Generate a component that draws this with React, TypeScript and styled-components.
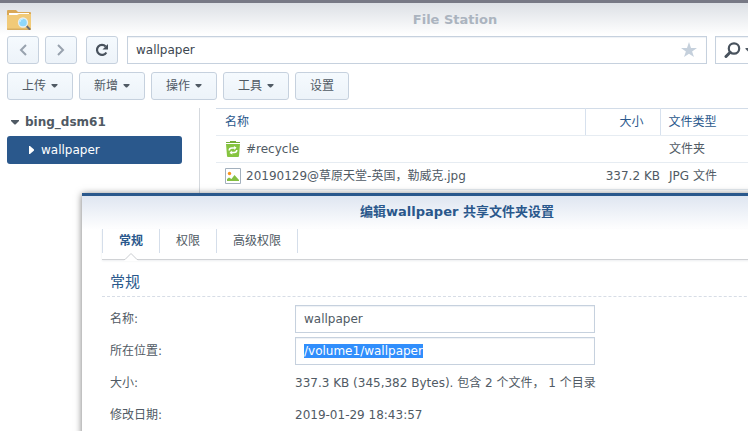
import React, { useEffect, useRef } from "react";
import styled, { createGlobalStyle, css } from "styled-components";

const ink = "#505a64";
const blue = "#2a588c";
const line = "#c6d1de";

const GlobalStyle = createGlobalStyle`
  * { box-sizing: border-box; }
  body {
    margin: 0;
    overflow: hidden;
    background: #fff;
    color: ${ink};
    font: 12px/16px "DejaVu Sans", "Noto Sans CJK SC", sans-serif;
  }
  button, input { font: inherit; color: inherit; }
`;

const Screen = styled.main`
  height: 100vh;
  overflow: hidden;
`;

const Window = styled.section`
  position: relative;
  display: flex;
  flex-direction: column;
  width: calc(100% + 162px);
  min-height: 100vh;
  border-top: 3px solid #777985;
  background: linear-gradient(#dce0e5, #fff 32px);
`;

const TitleBar = styled.header`
  display: grid;
  grid-template-columns: 24px 1fr 24px;
  align-items: center;
  height: 33px;
  padding: 0 7px;
`;

const Title = styled.h1`
  margin: 0;
  color: #abb4bf;
  font-size: 13px;
  line-height: 18px;
  font-weight: bold;
  text-align: center;
`;

const NavBar = styled.nav`
  display: flex;
  gap: 8px;
  padding: 0 7px;
`;

const NavGroup = styled.div`
  display: flex;
  gap: 6px;
  padding-right: 1px;
`;

const face = css`
  display: flex;
  align-items: center;
  justify-content: center;
  height: 28px;
  border: 1px solid ${line};
  border-radius: 3px;
  background: linear-gradient(#f5fafe, #edf3f9);
`;

const NavButton = styled.button`
  ${face}
  width: 32px;
  padding: 0;
`;

const field = css`
  height: 28px;
  border: 1px solid ${line};
  background: #fff;
  box-shadow: inset 0 1px 1px #eef1f5;
`;

const AddressBox = styled.div`
  ${field}
  display: flex;
  flex: 1;
  align-items: center;
  padding-right: 9px;
  margin-left: 1px;
`;

const BareInput = styled.input`
  flex: 1;
  min-width: 0;
  padding: 0 8px;
  border: 0;
  outline: 0;
  background: none;
`;

const AddressInput = styled(BareInput)`
  color: #3c4650;
`;

const IconButton = styled.button`
  display: flex;
  align-items: center;
  gap: 4px;
  padding: 0;
  border: 0;
  background: none;
`;

const SearchBox = styled.div`
  ${field}
  display: flex;
  flex: none;
  align-items: center;
  width: 188px;
  padding-left: 8px;
`;

const Toolbar = styled.div`
  display: flex;
  gap: 6px;
  padding: 8px 7px;
`;

const ToolButton = styled.button`
  ${face}
  gap: 5px;
  padding: 0 14px;
`;

const Body = styled.div`
  display: flex;
  flex: 1;
`;

const Sidebar = styled.aside`
  width: 200px;
  padding: 0 17px 0 7px;
  border-right: 1px solid #d5d9de;
`;

const TreeNode = styled.button<{ $child?: boolean }>`
  display: flex;
  align-items: center;
  gap: ${(p) => (p.$child ? 7 : 6)}px;
  width: 100%;
  height: 28px;
  padding: 0 0 0 ${(p) => (p.$child ? 22 : 4)}px;
  border: 0;
  border-radius: 3px;
  background: ${(p) => (p.$child ? blue : "none")};
  color: ${(p) => (p.$child ? "#fff" : ink)};
  font-weight: ${(p) => (p.$child ? "normal" : "bold")};
`;

const FileTable = styled.table`
  flex: 1;
  align-self: flex-start;
  margin: 0 7px 0 16px;
  table-layout: fixed;
  border-collapse: collapse;
  border-top: 1px solid #d2dce8;
`;

const Column = styled.col<{ $width?: number }>`
  width: ${(p) => (p.$width ? `${p.$width}px` : "auto")};
`;

const HeadCell = styled.th<{ $right?: boolean }>`
  height: 27px;
  padding: 0 ${(p) => (p.$right ? 16 : 8)}px 0 8px;
  border-bottom: 1px solid #e6ecf2;
  color: ${blue};
  font-weight: normal;
  text-align: ${(p) => (p.$right ? "right" : "left")};
  & + & { border-left: 1px solid #d7e1ee; }
  &:first-child { padding-left: 9px; }
`;

const Cell = styled.td<{ $right?: boolean }>`
  height: 27px;
  padding: 0 0 0 ${(p) => (p.$right ? 0 : 9)}px;
  border-bottom: 1px solid #e6ecf2;
  text-align: ${(p) => (p.$right ? "right" : "left")};
`;

const FileName = styled.span`
  display: flex;
  align-items: center;
  gap: 5px;
`;

const Dialog = styled.section`
  position: absolute;
  top: 190px;
  right: 78px;
  left: 82px;
  min-height: 420px;
  border-top: 3px solid ${blue};
  background: linear-gradient(#dfe6f1, #fff 34px);
  box-shadow: 0 1px 7px rgba(0, 0, 0, 0.55);
`;

const DialogTitle = styled.h2`
  margin: 0;
  padding: 7px 0 8px;
  color: ${blue};
  font-size: 13px;
  line-height: 18px;
  text-align: center;
`;

const Tabs = styled.div`
  display: flex;
  margin: 0 20px;
  padding-bottom: 6px;
  border-bottom: 1px solid #d0d2d5;
  box-shadow: 0 1px 2px #eceef0;
`;

const Tab = styled.button<{ $active?: boolean }>`
  position: relative;
  height: 24px;
  padding: 0 16px;
  border: solid #d5deea;
  border-width: 0 1px 0 0;
  background: none;
  color: ${(p) => (p.$active ? blue : ink)};
  font-weight: ${(p) => (p.$active ? "bold" : "normal")};
  &:first-child { border-left-width: 1px; }
`;

const Pointer = styled.svg`
  position: absolute;
  top: 24px;
  left: calc(50% - 7px);
`;

const Section = styled.h3`
  margin: 11px 20px 8px;
  padding: 0 8px 3px;
  border-bottom: 1px dashed #d7dde6;
  color: ${blue};
  font-size: 15px;
  line-height: 22px;
  font-weight: normal;
`;

const Form = styled.form`
  display: grid;
  grid-template-columns: 185px 1fr;
  row-gap: 4px;
  align-items: center;
  padding: 0 32px 0 28px;
  margin: 0;
`;

const Label = styled.label`
  grid-column: 1;
  line-height: 28px;
`;

const FormInput = styled.input`
  ${field}
  width: 300px;
  padding: 0 8px;
  outline: 0;
  &::selection { background: #308efc; color: #fff; }
`;

const FormValue = styled.output`
  line-height: 28px;
`;

const Caret = () => (
  <svg width="7" height="4" viewBox="0 0 7 4" aria-hidden="true">
    <path d="M.5 0h6v1L4 3.500H3L.5 1z" fill={ink} />
  </svg>
);

const FolderLogo = () => (
  <svg width="24" height="20" viewBox="0 0 24 20" aria-hidden="true">
    <path d="M0 1q0-1 1-1h8l2 2h12q1 0 1 1v6H0z" fill="#d9a856" />
    <path d="M2 3h20v4H2z" fill="#fff" />
    <path d="M0 5h10l2-1h12v15q0 1-1 1H1q-1 0-1-1z" fill="#f1ca78" />
    <path d="M0 18.5h24V19q0 1-1 1H1q-1 0-1-1z" fill="#d8ae62" />
    <path d="m19.5 16 3 3" stroke="#6c6e72" strokeWidth="2" strokeLinecap="round" />
    <circle cx="16" cy="12.5" r="4.5" fill="#8ed7fa" stroke="#e8eef0" strokeWidth="1.3" />
    <path d="M13 12q0-3 3-3" fill="none" stroke="#c6efff" strokeWidth="1.2" />
  </svg>
);

const Chevron = ({ d }: { d: string }) => (
  <svg width="10" height="14" viewBox="0 0 10 14" aria-hidden="true">
    <path d={d} fill="none" stroke="#98a2ae" strokeWidth="2" />
  </svg>
);

const Reload = () => (
  <svg width="14" height="14" viewBox="0 0 14 14" aria-hidden="true">
    <path d="M11.300 9.500A5 5 0 1 1 10.700 3.600" fill="none" stroke="#48525d" strokeWidth="2.200" />
    <path d="M13 1v5.500H7.500z" fill="#48525d" />
  </svg>
);

const Star = () => (
  <svg width="16" height="16" viewBox="0 0 16 16" aria-hidden="true">
    <path d="m8 0 2 5.900h6l-4.900 3.600L13 15l-5-3.300L3 15l1.900-5.500L0 5.900h6z" fill="#c5d0dc" />
  </svg>
);

const Magnifier = () => (
  <svg width="17" height="16" viewBox="0 0 17 16" aria-hidden="true">
    <circle cx="10" cy="6.500" r="5.200" fill="none" stroke="#48525d" strokeWidth="2.200" />
    <path d="M6.200 10.300 2 14.500" stroke="#48525d" strokeWidth="3" strokeLinecap="round" />
  </svg>
);

const TreeOpen = () => (
  <svg width="8" height="5" viewBox="0 0 8 5" aria-hidden="true">
    <path d="M0 0h8v1L4.500 4.500h-1L0 1z" fill={ink} />
  </svg>
);

const TreeClosed = () => (
  <svg width="5" height="8" viewBox="0 0 5 8" aria-hidden="true">
    <path d="M0 0h1l4 3.500v1L1 8H0z" fill="#fff" />
  </svg>
);

const RecycleIcon = () => (
  <svg width="16" height="16" viewBox="0 0 16 16" aria-hidden="true">
    <path d="M1 1h4V0h6v1h4v1H1z" fill="#75ad36" />
    <path d="M1 3h14l-1 12q0 1-1 1H3q-1 0-1-1z" fill="#86c440" />
    <path d="M4.200 9.500Q4.300 7 6.800 7h3M11.800 9q-.1 2.500-2.600 2.500h-3" fill="none" stroke="#fff" strokeWidth="1.500" />
    <path d="M8.800 5 11.500 6.500 9.500 9zM6.500 9.500 4.500 12l3 1.500z" fill="#fff" />
  </svg>
);

const ImageIcon = () => (
  <svg width="16" height="16" viewBox="0 0 16 16" aria-hidden="true">
    <path d="M.5.5h15v15H.5z" fill="#fff" stroke="#a3b0bd" />
    <circle cx="4.500" cy="5.500" r="1.700" fill="#f7941e" />
    <path d="M2 13v-2l2-1.500L6.500 11 9.500 7l4.500 5v1z" fill="#84bf41" />
  </svg>
);

const tools = ["上传", "新增", "操作", "工具"];

const files = [
  { icon: <RecycleIcon />, name: "#recycle", size: "", type: "文件夹" },
  { icon: <ImageIcon />, name: "20190129@草原天堂-英国，勒威克.jpg", size: "337.2 KB", type: "JPG 文件" },
];

export default function App() {
  const location = useRef<HTMLInputElement>(null);

  useEffect(() => {
    location.current?.focus({ preventScroll: true });
    location.current?.select();
  }, []);

  return (
    <Screen lang="zh-CN">
      <GlobalStyle />
      <Window>
        <TitleBar>
          <FolderLogo />
          <Title>File Station</Title>
        </TitleBar>
        <NavBar>
          <NavGroup>
            <NavButton aria-label="后退"><Chevron d="M8 2 3 7l5 5" /></NavButton>
            <NavButton aria-label="前进"><Chevron d="m2 2 5 5-5 5" /></NavButton>
          </NavGroup>
          <NavButton aria-label="刷新"><Reload /></NavButton>
          <AddressBox>
            <AddressInput aria-label="路径" defaultValue="wallpaper" />
            <IconButton aria-label="收藏"><Star /></IconButton>
          </AddressBox>
          <SearchBox>
            <IconButton aria-label="搜索"><Magnifier /><Caret /></IconButton>
            <BareInput type="search" aria-label="搜索" />
          </SearchBox>
        </NavBar>
        <Toolbar>
          {tools.map((tool) => (
            <ToolButton key={tool}>{tool}<Caret /></ToolButton>
          ))}
          <ToolButton>设置</ToolButton>
        </Toolbar>
        <Body>
          <Sidebar>
            <TreeNode><TreeOpen />bing_dsm61</TreeNode>
            <TreeNode $child><TreeClosed />wallpaper</TreeNode>
          </Sidebar>
          <FileTable>
            <colgroup>
              <Column />
              <Column $width={75} />
              <Column $width={243} />
            </colgroup>
            <thead>
              <tr>
                <HeadCell>名称</HeadCell>
                <HeadCell $right>大小</HeadCell>
                <HeadCell>文件类型</HeadCell>
              </tr>
            </thead>
            <tbody>
              {files.map((file) => (
                <tr key={file.name}>
                  <Cell><FileName>{file.icon}{file.name}</FileName></Cell>
                  <Cell $right>{file.size}</Cell>
                  <Cell>{file.type}</Cell>
                </tr>
              ))}
            </tbody>
          </FileTable>
        </Body>
        <Dialog role="dialog" aria-labelledby="dialog-title">
          <DialogTitle id="dialog-title">编辑wallpaper 共享文件夹设置</DialogTitle>
          <Tabs role="tablist">
            <Tab role="tab" aria-selected="true" $active>
              常规
              <Pointer width="14" height="8" viewBox="0 0 14 8" aria-hidden="true">
                <path d="M0 8 1 6.500 7 .5l6 6L14 8z" fill="#fff" />
                <path d="M0 6.500h1l6-6 6 6h1" fill="none" stroke="#c9ccd0" />
              </Pointer>
            </Tab>
            <Tab role="tab">权限</Tab>
            <Tab role="tab">高级权限</Tab>
          </Tabs>
          <Section>常规</Section>
          <Form>
            <Label htmlFor="name">名称:</Label>
            <FormInput id="name" defaultValue="wallpaper" />
            <Label htmlFor="location">所在位置:</Label>
            <FormInput id="location" ref={location} readOnly defaultValue="/volume1/wallpaper" />
            <Label htmlFor="size">大小:</Label>
            <FormValue id="size">337.3 KB (345,382 Bytes). 包含 2 个文件， 1 个目录</FormValue>
            <Label htmlFor="modified">修改日期:</Label>
            <FormValue id="modified">2019-01-29 18:43:57</FormValue>
          </Form>
        </Dialog>
      </Window>
    </Screen>
  );
}
